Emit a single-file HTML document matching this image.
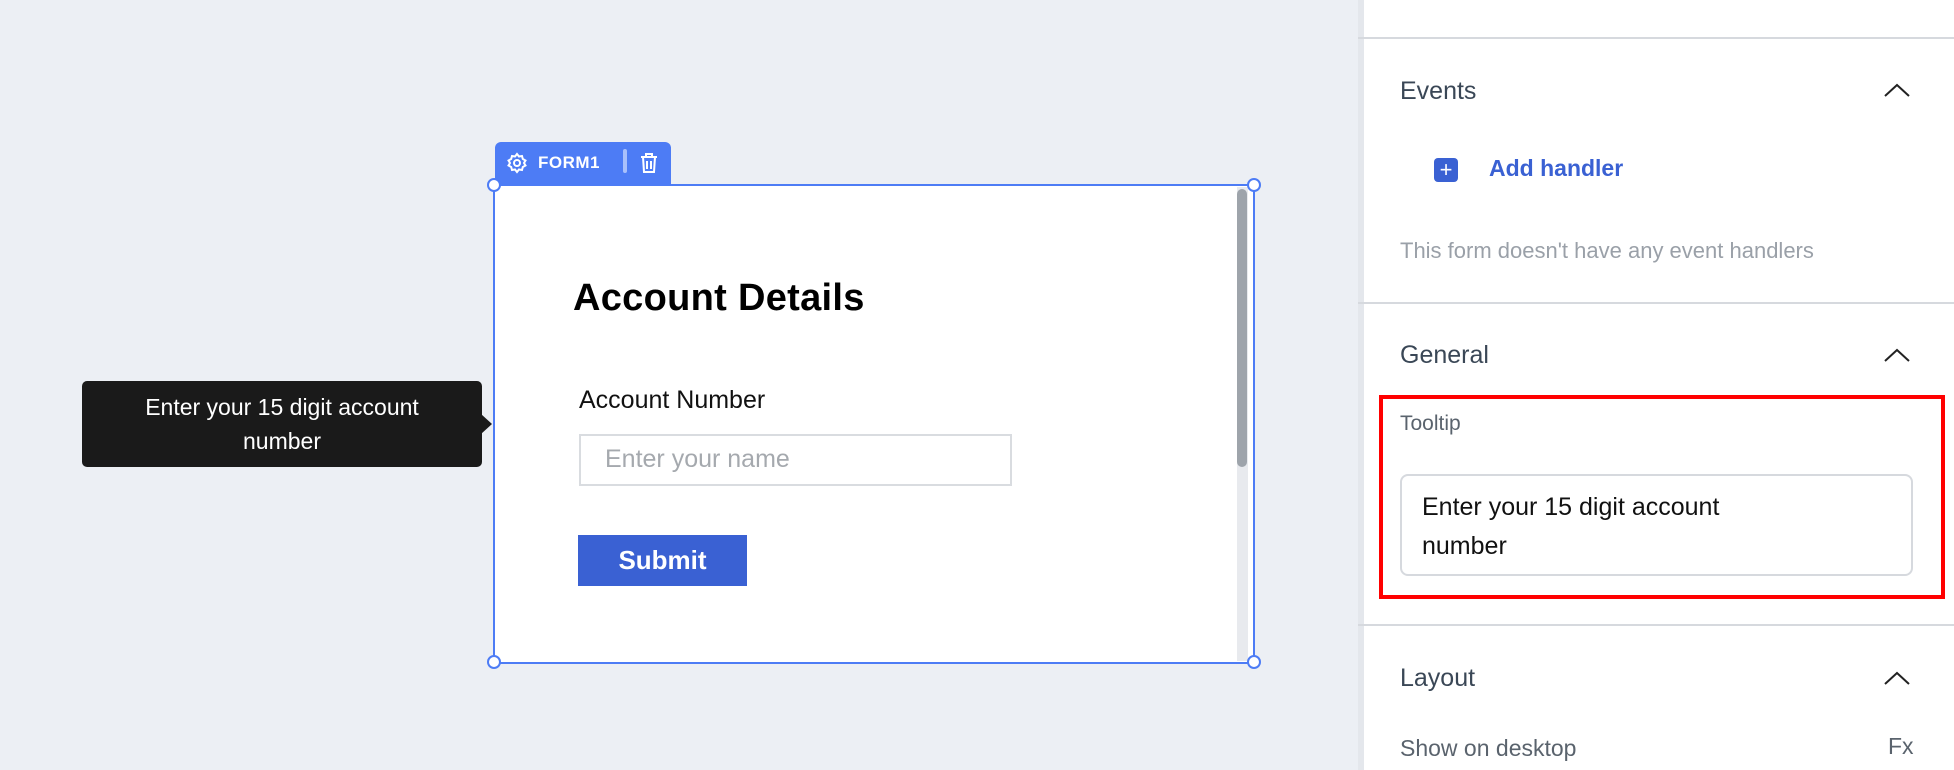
<!DOCTYPE html>
<html><head><style>
*{margin:0;padding:0;box-sizing:border-box}
body{width:1954px;height:770px;background:#eceff4;font-family:"Liberation Sans",sans-serif;position:relative;overflow:hidden}
.a{position:absolute}
.panel{left:1358px;top:0;width:596px;height:770px;background:#fff;border-left:6px solid #e4e7ec}
.hr{left:1358px;width:596px;height:2px;background:#d6d9de}
.h{font-size:25px;color:#3a4756;left:1400px}
.chev{left:1884px;width:26px;height:14px}
.handle{width:14px;height:14px;border:2px solid #4d7cf5;border-radius:50%;background:#fff}
</style></head><body>
<div class="a" style="left:495px;top:142px;width:176px;height:42px;background:#4d7cf5;border-radius:6px 6px 0 0"></div>
<svg class="a" style="left:505px;top:151px" width="24" height="24" viewBox="0 0 24 24" fill="none" stroke="#fff" stroke-width="2"><circle cx="12" cy="12" r="3"/><path d="M12 3l2 2.5 3-.5 .8 3 2.7 1.5-1.5 2.5 1.5 2.5-2.7 1.5-.8 3-3-.5-2 2.5-2-2.5-3 .5-.8-3L3.5 14.5 5 12 3.5 9.5 6.2 8l.8-3 3 .5z"/></svg>
<div class="a" style="left:538px;top:153px;font-size:17px;font-weight:bold;color:#fff;letter-spacing:0.5px">FORM1</div>
<div class="a" style="left:623px;top:149px;width:4px;height:24px;background:#a9c0fb;border-radius:2px"></div>
<svg class="a" style="left:638px;top:151px" width="22" height="24" viewBox="0 0 22 24" fill="none" stroke="#fff" stroke-width="2"><path d="M3 6h16M8 6V3h6v3M5 6l1 15h10l1-15M9 10v8M13 10v8"/></svg>
<div class="a" style="left:493px;top:184px;width:762px;height:480px;background:#fff;border:2px solid #4d7cf5"></div>
<div class="a" style="left:1237px;top:187px;width:11px;height:474px;background:#e8eaee"></div>
<div class="a" style="left:1237px;top:189px;width:10px;height:278px;background:#9ea4ab;border-radius:5px"></div>
<div class="a handle" style="left:487px;top:178px"></div>
<div class="a handle" style="left:1247px;top:178px"></div>
<div class="a handle" style="left:487px;top:655px"></div>
<div class="a handle" style="left:1247px;top:655px"></div>
<div class="a" style="left:573px;top:277px;font-size:38px;font-weight:bold;color:#000;letter-spacing:0.3px">Account Details</div>
<div class="a" style="left:579px;top:386px;font-size:25px;color:#111">Account Number</div>
<div class="a" style="left:579px;top:434px;width:433px;height:52px;border:2px solid #d9dce0;background:#fff"></div>
<div class="a" style="left:605px;top:445px;font-size:25px;color:#a5a9ae">Enter your name</div>
<div class="a" style="left:578px;top:535px;width:169px;height:51px;background:#3a61d3;color:#fff;font-size:26px;font-weight:bold;text-align:center;line-height:51px">Submit</div>
<div class="a" style="left:82px;top:381px;width:400px;height:86px;background:#1a1a1a;border-radius:5px;color:#fff;font-size:23px;text-align:center;line-height:34px;padding-top:9px">Enter your 15 digit account<br>number</div>
<div class="a" style="left:481px;top:414px;width:0;height:0;border-top:10px solid transparent;border-bottom:10px solid transparent;border-left:11px solid #1a1a1a"></div>
<div class="a panel"></div>
<div class="a hr" style="top:37px"></div>
<div class="a h" style="top:77px">Events</div>
<svg class="a chev" style="top:83px" viewBox="0 0 26 14"><path d="M1 13L13 2l12 11" fill="none" stroke="#222" stroke-width="2"/></svg>
<div class="a" style="left:1434px;top:158px;width:24px;height:24px;background:#3a61d3;border-radius:4px;color:#fff;font-size:22px;line-height:23px;text-align:center">+</div>
<div class="a" style="left:1489px;top:155px;font-size:23px;font-weight:bold;color:#3a61d3">Add handler</div>
<div class="a" style="left:1400px;top:238px;font-size:22px;color:#9aa0a8">This form doesn't have any event handlers</div>
<div class="a hr" style="top:302px"></div>
<div class="a h" style="top:341px">General</div>
<svg class="a chev" style="top:348px" viewBox="0 0 26 14"><path d="M1 13L13 2l12 11" fill="none" stroke="#222" stroke-width="2"/></svg>
<div class="a" style="left:1379px;top:395px;width:566px;height:204px;border:4px solid #f00"></div>
<div class="a" style="left:1400px;top:412px;font-size:21px;color:#5a636d">Tooltip</div>
<div class="a" style="left:1400px;top:474px;width:513px;height:102px;border:2px solid #d6d9de;border-radius:8px"></div>
<div class="a" style="left:1422px;top:488px;font-size:25px;color:#111;line-height:39px">Enter your 15 digit account<br>number</div>
<div class="a hr" style="top:624px"></div>
<div class="a h" style="top:664px">Layout</div>
<svg class="a chev" style="top:671px" viewBox="0 0 26 14"><path d="M1 13L13 2l12 11" fill="none" stroke="#222" stroke-width="2"/></svg>
<div class="a" style="left:1400px;top:735px;font-size:23px;color:#5a636d">Show on desktop</div>
<div class="a" style="left:1888px;top:733px;font-size:23px;color:#5a636d">Fx</div>
</body></html>
